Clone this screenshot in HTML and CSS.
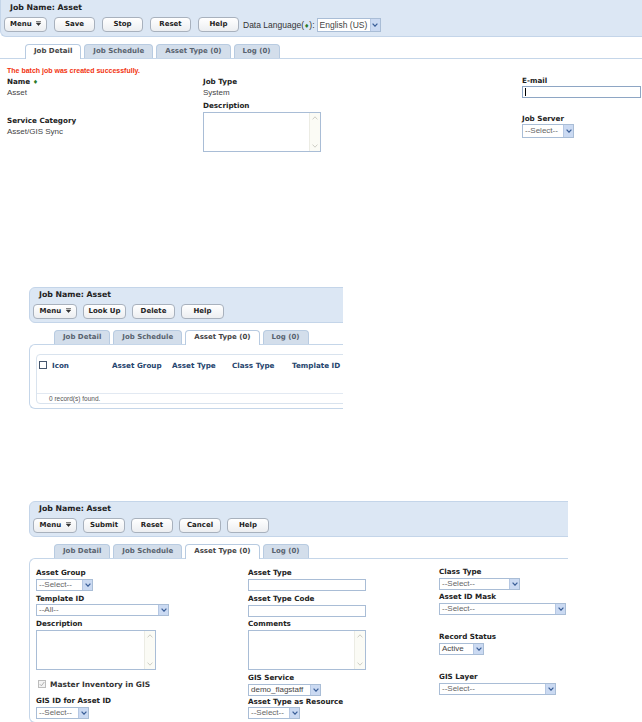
FILE: index.html
```html
<!DOCTYPE html>
<html lang="en">
<head>
    <meta charset="UTF-8">
    <title>Job Name: Asset</title>
<link rel="stylesheet" href="styles.css">
</head>
<body>

<!-- Job Detail tab, right after the job was saved -->
<div class="panel panel-detail">
    <div class="toolbar">
        <div class="job-name">Job Name: Asset</div>
        <div class="buttons buttons-wide">
            <button class="btn btn-menu">Menu <svg class="caret" width="5" height="5" viewBox="0 0 5 5"><path d="M0 0.5H5M0.3 2H4.7L2.5 4.6Z" fill="#333" stroke="#333" stroke-width="0.6"/></svg></button>
            <button class="btn">Save</button>
            <button class="btn">Stop</button>
            <button class="btn">Reset</button>
            <button class="btn">Help</button>
            <span class="lang-label">Data Language(<span class="req">&#9830;</span>):</span>
            <span class="select select-tall sel-lang"><span class="select-text">English (US)</span><span class="select-arrow"><svg width="6" height="4" viewBox="0 0 6 4"><path d="M0.6 0.6L3 3.2L5.4 0.6" fill="none" stroke="#3b5f98" stroke-width="1.2"/></svg></span></span>
        </div>
    </div>

    <ul class="tabs">
        <li class="tab tab-active">Job Detail</li>
        <li class="tab">Job Schedule</li>
        <li class="tab">Asset Type (0)</li>
        <li class="tab">Log (0)</li>
    </ul>

    <div class="tab-body tab-body-flat">
        <div class="message">The batch job was created successfully.</div>
        <div class="detail-grid">
            <div class="detail-col">
                <div class="label">Name <span class="req">&#9830;</span></div>
                <div class="value">Asset</div>
                <div class="label mt-17">Service Category</div>
                <div class="value">Asset/GIS Sync</div>
            </div>
            <div class="detail-col">
                <div class="label">Job Type</div>
                <div class="value">System</div>
                <div class="label mt-2">Description</div>
                <div class="textarea ta-job mt-1">
                    <div class="scrollbar">
                        <svg width="6" height="4" viewBox="0 0 6 4"><path d="M0.6 3.4L3 0.8L5.4 3.4" fill="none" stroke="#c8c8c0" stroke-width="0.9"/></svg>
                        <svg width="6" height="4" viewBox="0 0 6 4"><path d="M0.6 0.6L3 3.2L5.4 0.6" fill="none" stroke="#c8c8c0" stroke-width="0.9"/></svg>
                    </div>
                </div>
            </div>
            <div class="detail-col">
                <div class="label mt-n1">E-mail</div>
                <div class="input input-focus in-email"><span class="cursor"></span></div>
                <div class="label mt-15">Job Server</div>
                <span class="select select-tall sel-server"><span class="select-text">--Select--</span><span class="select-arrow"><svg width="6" height="4" viewBox="0 0 6 4"><path d="M0.6 0.6L3 3.2L5.4 0.6" fill="none" stroke="#3b5f98" stroke-width="1.2"/></svg></span></span>
            </div>
        </div>
    </div>
</div>

<!-- Asset Type tab, list view -->
<div class="frame frame-lookup">
    <div class="panel">
        <div class="toolbar">
            <div class="job-name">Job Name: Asset</div>
            <div class="buttons">
                <button class="btn btn-menu">Menu <svg class="caret" width="5" height="5" viewBox="0 0 5 5"><path d="M0 0.5H5M0.3 2H4.7L2.5 4.6Z" fill="#333" stroke="#333" stroke-width="0.6"/></svg></button>
                <button class="btn">Look Up</button>
                <button class="btn">Delete</button>
                <button class="btn">Help</button>
            </div>
        </div>

        <ul class="tabs">
            <li class="tab">Job Detail</li>
            <li class="tab">Job Schedule</li>
            <li class="tab tab-active">Asset Type (0)</li>
            <li class="tab">Log (0)</li>
        </ul>

        <div class="tab-body tab-body-boxed list-body">
            <div class="grid-box">
                <div class="grid-head">
                    <span class="check"></span>
                    <span class="th">Icon</span>
                    <span class="th">Asset Group</span>
                    <span class="th">Asset Type</span>
                    <span class="th">Class Type</span>
                    <span class="th">Template ID</span>
                </div>
                <div class="grid-foot">0 record(s) found.</div>
            </div>
        </div>
    </div>
</div>

<!-- Asset Type tab, new record -->
<div class="frame frame-edit">
    <div class="panel">
        <div class="toolbar">
            <div class="job-name">Job Name: Asset</div>
            <div class="buttons">
                <button class="btn btn-menu">Menu <svg class="caret" width="5" height="5" viewBox="0 0 5 5"><path d="M0 0.5H5M0.3 2H4.7L2.5 4.6Z" fill="#333" stroke="#333" stroke-width="0.6"/></svg></button>
                <button class="btn btn-narrow">Submit</button>
                <button class="btn btn-narrow">Reset</button>
                <button class="btn btn-narrow">Cancel</button>
                <button class="btn btn-narrow">Help</button>
            </div>
        </div>

        <ul class="tabs">
            <li class="tab">Job Detail</li>
            <li class="tab">Job Schedule</li>
            <li class="tab tab-active">Asset Type (0)</li>
            <li class="tab">Log (0)</li>
        </ul>

        <div class="tab-body tab-body-boxed form-body">
            <div class="form-col col-a">
                <div class="label">Asset Group</div>
                <span class="select sel-group mt-1"><span class="select-text">--Select--</span><span class="select-arrow"><svg width="6" height="4" viewBox="0 0 6 4"><path d="M0.6 0.6L3 3.2L5.4 0.6" fill="none" stroke="#3b5f98" stroke-width="1.2"/></svg></span></span>
                <div class="label mt-2">Template ID</div>
                <span class="select sel-template"><span class="select-text">--All--</span><span class="select-arrow"><svg width="6" height="4" viewBox="0 0 6 4"><path d="M0.6 0.6L3 3.2L5.4 0.6" fill="none" stroke="#3b5f98" stroke-width="1.2"/></svg></span></span>
                <div class="label mt-2">Description</div>
                <div class="textarea ta-desc mt-1">
                    <div class="scrollbar">
                        <svg width="6" height="4" viewBox="0 0 6 4"><path d="M0.6 3.4L3 0.8L5.4 3.4" fill="none" stroke="#c8c8c0" stroke-width="0.9"/></svg>
                        <svg width="6" height="4" viewBox="0 0 6 4"><path d="M0.6 0.6L3 3.2L5.4 0.6" fill="none" stroke="#c8c8c0" stroke-width="0.9"/></svg>
                    </div>
                </div>
                <div class="check-row">
                    <span class="check check-disabled"><svg width="6" height="6" viewBox="0 0 6 6"><path d="M0.8 3.2L2.4 4.8L5.3 1" fill="none" stroke="#a8a8a8" stroke-width="0.9"/></svg></span>
                    <span class="check-label">Master Inventory in GIS</span>
                </div>
                <div class="label mt-5">GIS ID for Asset ID</div>
                <span class="select sel-gisid mt-1"><span class="select-text">--Select--</span><span class="select-arrow"><svg width="6" height="4" viewBox="0 0 6 4"><path d="M0.6 0.6L3 3.2L5.4 0.6" fill="none" stroke="#3b5f98" stroke-width="1.2"/></svg></span></span>
            </div>

            <div class="form-col col-b">
                <div class="label">Asset Type</div>
                <div class="input in-wide mt-1"></div>
                <div class="label mt-2">Asset Type Code</div>
                <div class="input in-wide mt-1"></div>
                <div class="label mt-1">Comments</div>
                <div class="textarea ta-comments mt-1">
                    <div class="scrollbar">
                        <svg width="6" height="4" viewBox="0 0 6 4"><path d="M0.6 3.4L3 0.8L5.4 3.4" fill="none" stroke="#c8c8c0" stroke-width="0.9"/></svg>
                        <svg width="6" height="4" viewBox="0 0 6 4"><path d="M0.6 0.6L3 3.2L5.4 0.6" fill="none" stroke="#c8c8c0" stroke-width="0.9"/></svg>
                    </div>
                </div>
                <div class="label mt-2">GIS Service</div>
                <span class="select sel-service mt-1"><span class="select-text text-dark">demo_flagstaff</span><span class="select-arrow"><svg width="6" height="4" viewBox="0 0 6 4"><path d="M0.6 0.6L3 3.2L5.4 0.6" fill="none" stroke="#3b5f98" stroke-width="1.2"/></svg></span></span>
                <div class="label">Asset Type as Resource</div>
                <span class="select sel-resource"><span class="select-text">--Select--</span><span class="select-arrow"><svg width="6" height="4" viewBox="0 0 6 4"><path d="M0.6 0.6L3 3.2L5.4 0.6" fill="none" stroke="#3b5f98" stroke-width="1.2"/></svg></span></span>
            </div>

            <div class="form-col col-c">
                <div class="label mt-n1">Class Type</div>
                <span class="select sel-class mt-1"><span class="select-text">--Select--</span><span class="select-arrow"><svg width="6" height="4" viewBox="0 0 6 4"><path d="M0.6 0.6L3 3.2L5.4 0.6" fill="none" stroke="#3b5f98" stroke-width="1.2"/></svg></span></span>
                <div class="label mt-1">Asset ID Mask</div>
                <span class="select sel-mask mt-1"><span class="select-text">--Select--</span><span class="select-arrow"><svg width="6" height="4" viewBox="0 0 6 4"><path d="M0.6 0.6L3 3.2L5.4 0.6" fill="none" stroke="#3b5f98" stroke-width="1.2"/></svg></span></span>
                <div class="label mt-16">Record Status</div>
                <span class="select sel-status mt-1"><span class="select-text text-dark">Active</span><span class="select-arrow"><svg width="6" height="4" viewBox="0 0 6 4"><path d="M0.6 0.6L3 3.2L5.4 0.6" fill="none" stroke="#3b5f98" stroke-width="1.2"/></svg></span></span>
                <div class="label mt-16">GIS Layer</div>
                <span class="select sel-layer mt-1"><span class="select-text">--Select--</span><span class="select-arrow"><svg width="6" height="4" viewBox="0 0 6 4"><path d="M0.6 0.6L3 3.2L5.4 0.6" fill="none" stroke="#3b5f98" stroke-width="1.2"/></svg></span></span>
            </div>
        </div>
    </div>
</div>

</body>
</html>
```

FILE: styles.css
```css
body {
    margin: 0;
    height: 722px;
    overflow: hidden;
    background-color: #fff;
    font-family: "Liberation Sans", Arial, sans-serif;
    font-size: 8px;
    color: #333;
}

/* the two lower screens are cropped on the right */
.frame {
    overflow: hidden;
    margin-left: 29px;
}
.frame-lookup {
    width: 314px;
    margin-top: 135px;
}
.frame-edit {
    width: 539px;
    margin-top: 92px;
}
.frame .panel {
    width: 640px;
}

/* toolbar */
.toolbar {
    background-color: #dce7f4;
    border: 1px solid #c4d5e9;
    border-radius: 6px;
    padding: 1px 3px 3px;
}
.panel-detail .toolbar {
    border-width: 0 0 1px 1px;
    border-radius: 0 0 0 6px;
    padding: 2px 3px 4px;
}

.job-name {
    font-family: "DejaVu Sans", Verdana, sans-serif;
    font-weight: bold;
    font-size: 7.8px;
    line-height: 12px;
    color: #222;
    padding-left: 6px;
}

.buttons {
    display: flex;
    align-items: center;
    gap: 6px;
    margin-top: 3px;
}
.buttons-wide {
    gap: 7px;
}

.btn {
    box-sizing: border-box;
    min-width: 43px;
    height: 15px;
    padding: 0 4px;
    border: 1px solid #a8b1bd;
    border-radius: 4px;
    background: linear-gradient(#ffffff, #eceef1);
    font-family: "DejaVu Sans", Verdana, sans-serif;
    font-weight: bold;
    font-size: 7px;
    line-height: 13px;
    color: #222;
}
.btn-narrow {
    min-width: 42px;
}
.btn-menu {
    min-width: 44px;
}
.buttons-wide .btn {
    min-width: 41px;
    padding: 0 3px;
}
.buttons-wide .btn-menu {
    min-width: 43px;
}
.caret {
    margin-left: 2px;
    vertical-align: 0;
}

.lang-label {
    margin-left: -3px;
    margin-right: -5px;
    font-size: 8.5px;
    color: #333;
}

.req {
    font-family: "DejaVu Sans", sans-serif;
    font-size: 6px;
    color: #2b7a2b;
}

/* tabs */
.tabs {
    display: flex;
    align-items: flex-end;
    gap: 3px;
    height: 14px;
    margin: 7px 0 0 25px;
    padding: 0;
    list-style: none;
}
.tab {
    box-sizing: border-box;
    height: 14px;
    padding: 0 8px;
    border: 1px solid #b8cbe1;
    border-bottom: none;
    border-radius: 4px 4px 0 0;
    background-color: #d3deeb;
    font-family: "DejaVu Sans", Verdana, sans-serif;
    font-weight: bold;
    font-size: 7px;
    line-height: 13px;
    color: #58626e;
}
.tab-active {
    position: relative;
    height: 15px;
    margin-bottom: -1px;
    background-color: #fff;
    color: #444;
}

.tab-body-flat {
    border-top: 1px solid #c5d6e9;
}
.tab-body-boxed {
    border: 1px solid #c5d6e9;
    border-right: none;
    border-radius: 6px 0 0 6px;
}

/* job detail */
.message {
    margin-top: 7px;
    padding-left: 7px;
    font-weight: bold;
    font-size: 7px;
    line-height: 10px;
    color: #f2330f;
}

.detail-grid {
    display: grid;
    grid-template-columns: 196px 319px 119px;
    padding-left: 7px;
}

.label {
    font-family: "DejaVu Sans", Verdana, sans-serif;
    font-weight: bold;
    font-size: 7.2px;
    line-height: 11px;
    color: #222;
    white-space: nowrap;
}
.value {
    font-size: 8px;
    line-height: 11px;
    color: #444;
}

.mt-n1 { margin-top: -1px; }
.mt-1 { margin-top: 1px; }
.mt-2 { margin-top: 2px; }
.mt-5 { margin-top: 5px; }
.mt-15 { margin-top: 15px; }
.mt-16 { margin-top: 16px; }
.mt-17 { margin-top: 17px; }

/* form controls */
.input {
    box-sizing: border-box;
    height: 12px;
    border: 1px solid #a9bdd6;
    background-color: #fff;
}
.input-focus {
    border-color: #8ea6c4;
    padding: 1px 0 0 2px;
}
.cursor {
    display: block;
    width: 1px;
    height: 8px;
    background-color: #000;
}
.in-email { width: 119px; }
.in-wide { width: 118px; }

.select {
    box-sizing: border-box;
    display: flex;
    height: 12px;
    border: 1px solid #a9bdd6;
    background-color: #fff;
    font-size: 8px;
    line-height: 10px;
    color: #666;
}
.select-tall {
    height: 14px;
    line-height: 12px;
}
.select-text {
    flex: 1;
    padding-left: 2px;
    white-space: nowrap;
    overflow: hidden;
}
.text-dark {
    color: #444;
}
.select-arrow {
    display: flex;
    align-items: center;
    justify-content: center;
    width: 9px;
    background-color: #cbdaf2;
    border-left: 1px solid #b6c8e3;
}

.buttons .select {
    font-size: 8.5px;
    color: #444;
}

.sel-lang { width: 64px; }
.sel-server { width: 52px; }
.sel-group { width: 57px; }
.sel-template { width: 133px; }
.sel-gisid { width: 53px; }
.sel-service { width: 73px; }
.sel-resource { width: 52px; }
.sel-class { width: 81px; }
.sel-mask { width: 127px; }
.sel-status { width: 45px; }
.sel-layer { width: 117px; }

.textarea {
    box-sizing: border-box;
    display: flex;
    justify-content: flex-end;
    height: 40px;
    border: 1px solid #a9bdd6;
    background-color: #fff;
}
.scrollbar {
    display: flex;
    flex-direction: column;
    justify-content: space-between;
    align-items: center;
    width: 10px;
    padding: 3px 0;
    background-color: #fbfbf5;
    border-left: 1px solid #ecece4;
}
.ta-job { width: 118px; }
.ta-desc { width: 120px; }
.ta-comments { width: 118px; }

/* asset type list */
.list-body {
    padding: 9px 0 4px 6px;
}
.grid-box {
    width: 600px;
    border: 1px solid #d9e3ee;
    border-radius: 4px;
}
.grid-head {
    display: flex;
    align-items: center;
    height: 20px;
    margin-bottom: 18px;
    padding-left: 2px;
}
.check {
    box-sizing: border-box;
    display: inline-flex;
    align-items: center;
    justify-content: center;
    width: 8px;
    height: 8px;
    margin-right: 5px;
    border: 1px solid #45566d;
    background-color: #fff;
}
.th {
    width: 60px;
    font-family: "DejaVu Sans", Verdana, sans-serif;
    font-weight: bold;
    font-size: 7.2px;
    color: #25446d;
    white-space: nowrap;
}
.grid-foot {
    border-top: 1px solid #e2e9f2;
    padding-left: 12px;
    font-size: 6.5px;
    line-height: 9px;
    color: #555;
}

/* asset type form */
.form-body {
    box-sizing: border-box;
    display: flex;
    height: 165px;
    padding: 8px 0 0 6px;
}
.form-col {
    display: flex;
    flex-direction: column;
    align-items: flex-start;
}
.col-a { width: 212px; }
.col-b { width: 191px; }

.check-row {
    display: flex;
    align-items: center;
    height: 12px;
    margin-top: 8px;
    padding-left: 2px;
}
.check-disabled {
    border-color: #bcbcbc;
    background-color: #f3f3f3;
    margin-right: 4px;
}
.check-label {
    font-family: "DejaVu Sans", Verdana, sans-serif;
    font-weight: bold;
    font-size: 7.5px;
    color: #333;
}
```
